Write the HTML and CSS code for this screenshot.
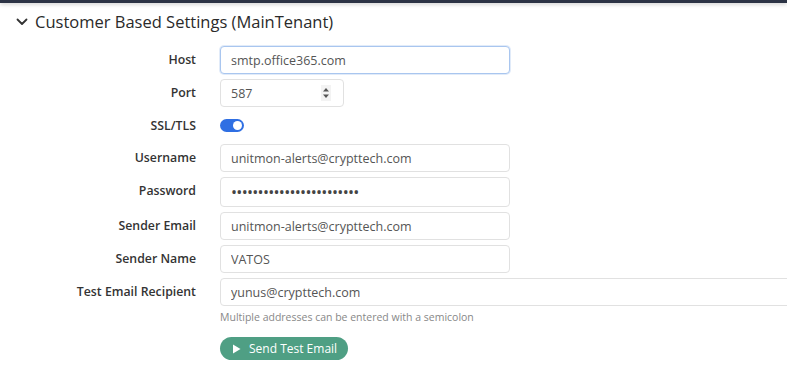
FILE: index.html
```html
<!DOCTYPE html>
<html lang="en">
<head>
  <meta charset="UTF-8">
  <meta name="viewport" content="width=device-width, initial-scale=1.0">
  <title>Customer Based Settings</title>
  <link rel="stylesheet" href="styles.css">
</head>
<body>
  <div class="topbar"></div>
  <div class="panel">
    <div class="panel-header">
      <svg class="chevron" width="12" height="8" viewBox="0 0 12 8"><path d="M1.5 1.5 L6 6 L10.5 1.5" fill="none" stroke="#333" stroke-width="1.8" stroke-linecap="round" stroke-linejoin="round"/></svg>
      <h2>Customer Based Settings (MainTenant)</h2>
    </div>

    <div class="form">
      <label for="host">Host</label>
      <div class="field"><input type="text" id="host" class="input focused" value="smtp.office365.com"></div>

      <label for="port">Port</label>
      <div class="field">
        <div class="input port">
          <span>587</span>
          <span class="spinner">
            <svg width="8" height="14" viewBox="0 0 8 14"><path d="M4 2 L7 5.5 L1 5.5 Z" fill="#555"/><path d="M4 12 L7 8.5 L1 8.5 Z" fill="#555"/></svg>
          </span>
        </div>
      </div>

      <label class="ssl-label">SSL/TLS</label>
      <div class="field switch-row"><span class="switch"><span class="knob"></span></span></div>

      <label for="username">Username</label>
      <div class="field"><input type="text" id="username" class="input" value="unitmon-alerts@crypttech.com"></div>

      <label for="password">Password</label>
      <div class="field"><div class="input dots" id="password">••••••••••••••••••••••••</div></div>

      <label for="sender-email">Sender Email</label>
      <div class="field"><input type="text" id="sender-email" class="input" value="unitmon-alerts@crypttech.com"></div>

      <label for="sender-name">Sender Name</label>
      <div class="field"><input type="text" id="sender-name" class="input" value="VATOS"></div>

      <label for="recipient">Test Email Recipient</label>
      <div class="field">
        <input type="text" id="recipient" class="input wide" value="yunus@crypttech.com">
        <p class="help">Multiple addresses can be entered with a semicolon</p>
        <a href="#" class="btn-send">
          <svg width="9" height="10" viewBox="0 0 9 10"><path d="M1 0.5 L8.5 5 L1 9.5 Z" fill="#fff"/></svg>
          Send Test Email
        </a>
      </div>
    </div>
  </div>
</body>
</html>
```

FILE: styles.css
```css
* {
  margin: 0;
  padding: 0;
  box-sizing: border-box;
  font-family: 'Open Sans', 'DejaVu Sans', sans-serif;
}
body {
  background: #fff;
  color: #333;
  overflow: hidden;
}
.topbar {
  height: 3px;
  background: #2c3345;
  box-shadow: 0 1px 4px rgba(0, 0, 0, 0.25);
}
.panel-header {
  display: flex;
  align-items: center;
  height: 37px;
  padding-left: 16px;
  gap: 7px;
}
.panel-header h2 {
  font-size: 16.5px;
  font-weight: 500;
  color: #2a2a2a;
}
.form {
  display: grid;
  grid-template-columns: 196px 1fr;
  column-gap: 24px;
  row-gap: 5px;
  margin-top: 6px;
}
.form label {
  text-align: right;
  font-size: 12.3px;
  font-weight: 600;
  color: #333;
  line-height: 28px;
}
.form .ssl-label {
  line-height: 27px;
}
.input {
  display: block;
  width: 290px;
  height: 28px;
  padding: 0 10px;
  border: 1px solid #e1e1e1;
  border-radius: 4px;
  font-size: 12.5px;
  color: #555;
  background: #fff;
  outline: none;
}
.input.focused {
  border-color: #a9c6ef;
  box-shadow: 0 0 0 1px rgba(169, 198, 239, 0.35);
}
.port {
  width: 124px;
  display: flex;
  align-items: center;
  justify-content: space-between;
  padding-right: 12px;
}
.spinner {
  display: flex;
  align-items: center;
  background: #f3f3f3;
  height: 16px;
  padding: 0 1px;
}
.switch-row {
  height: 27px;
  display: flex;
  align-items: center;
}
.switch {
  display: inline-block;
  position: relative;
  width: 24px;
  height: 13px;
  border-radius: 7px;
  background: #2f6fe3;
}
.knob {
  position: absolute;
  top: 2px;
  right: 2px;
  width: 9px;
  height: 9px;
  border-radius: 50%;
  background: #fff;
}
.dots {
  height: 30px;
  line-height: 28px;
  font-size: 16px;
  letter-spacing: -0.7px;
  color: #444;
}
.wide {
  width: 600px;
}
.help {
  font-size: 10.5px;
  color: #888;
  margin-top: 4px;
  line-height: 14px;
}
.btn-send {
  display: inline-flex;
  align-items: center;
  gap: 8px;
  margin-top: 13px;
  height: 23px;
  padding: 0 11px 0 12px;
  border-radius: 12px;
  background: #4f9f84;
  color: #fff;
  text-decoration: none;
  font-size: 12px;
  font-weight: 500;
}
```
